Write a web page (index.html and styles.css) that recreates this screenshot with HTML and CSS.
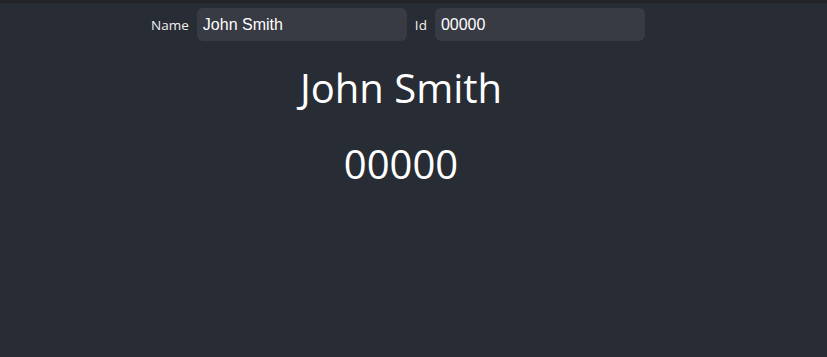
FILE: index.html
```html
<!DOCTYPE html>
<html lang="en">
<head>
    <meta charset="UTF-8">
    <meta name="viewport" content="width=device-width, initial-scale=1.0">
    <title>Profile</title>

    <link rel="stylesheet" href="styles.css">

</head>

<body>

    <div class="app">

        <form class="fields">
            <label for="name">Name</label>
            <input id="name" type="text" value="John Smith">

            <label for="id">Id</label>
            <input id="id" type="text" value="00000">
        </form>

        <h1 class="show">John Smith</h1>
        <h1 class="show">00000</h1>

    </div>

</body>

</html>
```

FILE: styles.css
```css
*, html {
    box-sizing: border-box;
    margin: 0;
    padding: 0;
}

body {
    min-height: 100vh;
    background: #282c34;
    border-top: 3px solid #212329;
    font-family: "Open Sans", "Noto Sans", sans-serif;
    color: #fff;
}

.app {
    padding-right: 25px;
    text-align: center;
}

.fields {
    display: flex;
    justify-content: center;
    align-items: center;
    gap: 8px;
    padding-top: 5px;
    padding-right: 6px;
}

label {
    font-size: 13.5px;
    color: #f0f0f0;
}

input {
    width: 210px;
    height: 33px;
    border: none;
    border-radius: 6px;
    background: #383a44;
    color: #fff;
    font-family: "Liberation Sans", Arial, sans-serif;
    font-size: 16px;
    padding-left: 6px;
    outline: none;
}

.show {
    font-weight: 400;
    font-size: 40px;
    line-height: 1;
}

.show:first-of-type {
    margin-top: 27px;
}

.show + .show {
    margin-top: 36px;
}
```
